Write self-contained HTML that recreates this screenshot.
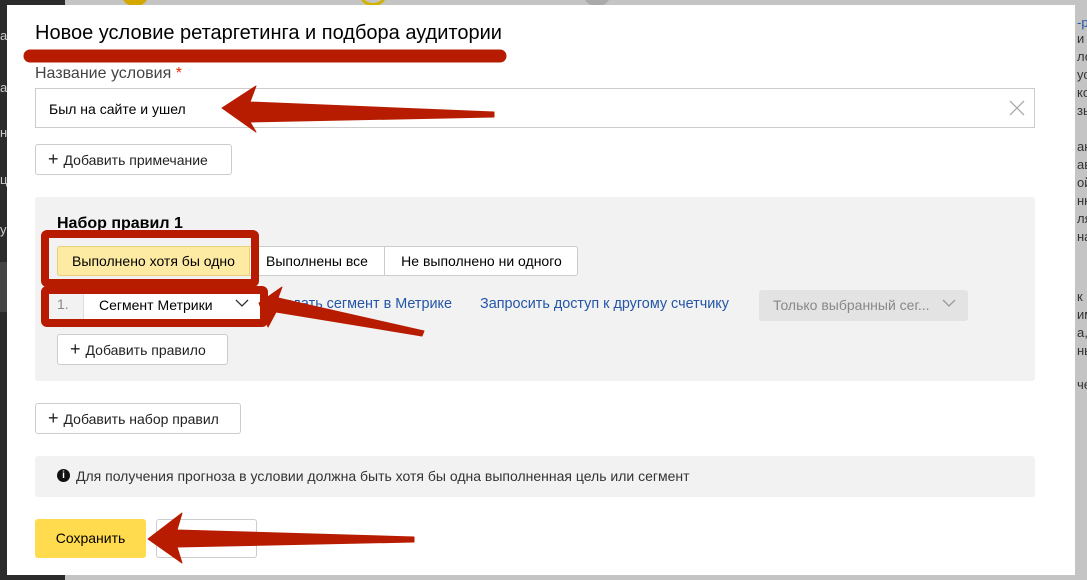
<!DOCTYPE html>
<html><head><meta charset="utf-8"><style>
*{box-sizing:border-box;margin:0;padding:0}
body{width:1087px;height:580px;overflow:hidden;background:#c4c4c4;font-family:"Liberation Sans","DejaVu Sans",sans-serif;position:relative;color:#000}
.abs{position:absolute}
.btn{position:absolute;border:1px solid #ccc;border-radius:3px;background:#fff;font-size:14px;line-height:28px;padding-left:12px;color:#222}
.btn b{font-weight:normal;font-size:18px;margin-right:5px}
.side{position:absolute;left:1077px;font-size:13px;color:#333;line-height:18px;white-space:nowrap}
</style></head><body>
<div class="abs" style="left:0;top:0;width:65px;height:580px;background:#2b2b2b"></div>
<div class="abs" style="left:122px;top:-14px;width:26px;height:20px;border-radius:50%;background:#d4a800"></div>
<div class="abs" style="left:360px;top:-14px;width:26px;height:20px;border-radius:50%;border:3px solid #d4b200"></div>
<div class="abs" style="left:584px;top:-14px;width:26px;height:20px;border-radius:50%;background:#aaa"></div>
<div class="side" style="top:14px;color:#2456a6">-р</div>
<div class="side" style="top:30px">и</div>
<div class="side" style="top:48px">ло</div>
<div class="side" style="top:66px">ус</div>
<div class="side" style="top:84px">ко</div>
<div class="side" style="top:102px">зы</div>
<div class="side" style="top:138px">ак</div>
<div class="side" style="top:156px">ав</div>
<div class="side" style="top:174px">ой</div>
<div class="side" style="top:192px">нн</div>
<div class="side" style="top:210px">ля</div>
<div class="side" style="top:228px">на</div>
<div class="side" style="top:288px">к и</div>
<div class="side" style="top:306px">им</div>
<div class="side" style="top:324px">а,</div>
<div class="side" style="top:342px">нь</div>
<div class="side" style="top:376px">че</div>
<div class="abs" style="left:0;top:28px;color:#ccc;font-size:13px">а</div>
<div class="abs" style="left:0;top:80px;color:#ccc;font-size:13px">а</div>
<div class="abs" style="left:0;top:125px;color:#ccc;font-size:13px">н</div>
<div class="abs" style="left:0;top:172px;color:#ccc;font-size:13px">ц</div>
<div class="abs" style="left:0;top:222px;color:#ccc;font-size:13px">у</div>
<div class="abs" style="left:0;top:262px;width:7px;height:50px;background:#444"></div>

<div class="abs" style="left:7px;top:5px;width:1068px;height:570px;background:#fff"></div>
<div class="abs" style="left:35px;top:22px;font-size:20px">Новое условие ретаргетинга и подбора аудитории</div>
<div class="abs" style="left:35px;top:65px;font-size:16px;color:#444">Название условия <span style="color:#e52b00">*</span></div>
<div class="abs" style="left:35px;top:88px;width:1000px;height:40px;border:1px solid #ccc"></div>
<div class="abs" style="left:49px;top:101px;font-size:14px">Был на сайте и ушел</div>
<svg class="abs" style="left:1008px;top:99px" width="18" height="18"><path d="M2 2L16 16M16 2L2 16" stroke="#aaa" stroke-width="1.3"/></svg>
<div class="btn" style="left:35px;top:144px;width:197px;height:31px"><b>+</b>Добавить примечание</div>

<div class="abs" style="left:35px;top:197px;width:1000px;height:184px;background:#f2f2f2;border-radius:3px"></div>
<div class="abs" style="left:57px;top:215px;font-size:16px;font-weight:bold">Набор правил 1</div>
<div class="abs" style="left:57px;top:246px;width:521px;height:30px;border:1px solid #ccc;border-radius:3px;background:#fff"></div>
<div class="abs" style="left:57px;top:246px;width:193px;height:30px;background:#feeba3;border:1px solid #e8cf7a;border-radius:3px 0 0 3px;font-size:14px;line-height:28px;text-align:center">Выполнено хотя бы одно</div>
<div class="abs" style="left:266px;top:246px;width:119px;height:30px;font-size:14px;line-height:30px;border-right:1px solid #ccc">Выполнены все</div>
<div class="abs" style="left:385px;top:246px;width:193px;height:30px;font-size:14px;line-height:30px;text-align:center">Не выполнено ни одного</div>
<div class="abs" style="left:57px;top:296px;font-size:14px;color:#888">1.</div>
<div class="abs" style="left:83px;top:290px;width:180px;height:31px;background:#fff;border:1px solid #ddd;border-radius:3px;font-size:14px;line-height:29px;padding-left:15px">Сегмент Метрики</div>
<svg class="abs" style="left:235px;top:298px" width="14" height="10"><path d="M1 2L7 8L13 2" stroke="#333" stroke-width="1.3" fill="none"/></svg>
<div class="abs" style="left:268px;top:296px;font-size:14.4px;color:#2456a6">Создать сегмент в Метрике</div>
<div class="abs" style="left:480px;top:296px;font-size:14.4px;color:#2456a6">Запросить доступ к другому счетчику</div>
<div class="abs" style="left:759px;top:290px;width:209px;height:31px;background:#e3e3e3;border-radius:3px;font-size:14px;line-height:31px;padding-left:14px;color:#888">Только выбранный сег...</div>
<svg class="abs" style="left:942px;top:298px" width="14" height="10"><path d="M1 2L7 8L13 2" stroke="#999" stroke-width="1.3" fill="none"/></svg>
<div class="btn" style="left:57px;top:334px;width:171px;height:31px;background:#fff"><b>+</b>Добавить правило</div>

<div class="btn" style="left:35px;top:403px;width:206px;height:31px"><b>+</b>Добавить набор правил</div>
<div class="abs" style="left:35px;top:456px;width:1000px;height:41px;background:#f2f2f2;border-radius:3px"></div>
<div class="abs" style="left:57px;top:469px;width:13px;height:13px;border-radius:50%;background:#111;color:#fff;font-size:10px;line-height:13px;text-align:center;font-weight:bold">i</div>
<div class="abs" style="left:76px;top:468px;font-size:14px;color:#333">Для получения прогноза в условии должна быть хотя бы одна выполненная цель или сегмент</div>
<div class="abs" style="left:35px;top:519px;width:111px;height:39px;background:#ffdb4d;border-radius:3px;font-size:14px;line-height:39px;text-align:center">Сохранить</div>
<div class="abs" style="left:156px;top:519px;width:101px;height:39px;border:1px solid #ccc;border-radius:3px"></div>

<svg class="abs" style="left:0;top:0" width="1087" height="580">
<g fill="#b81c00" stroke="#b81c00" stroke-linejoin="round">
<line x1="30" y1="56" x2="500" y2="56" stroke-width="13" stroke-linecap="round"/>
<rect x="45" y="234" width="210" height="49" fill="none" stroke-width="8" rx="2"/>
<rect x="45" y="290" width="219" height="33" fill="none" stroke-width="8" rx="2"/>
<polygon points="222,108 256,86 250,102 494,112 494,117 250,122 256,132"/>
<polygon points="259,303 282,287 278,298 424,331 422,336 276,312 268,327"/>
<polygon points="148,539 182,513 177,530 414,537 414,542 177,547 182,563"/>
</g>
</svg>
</body></html>
